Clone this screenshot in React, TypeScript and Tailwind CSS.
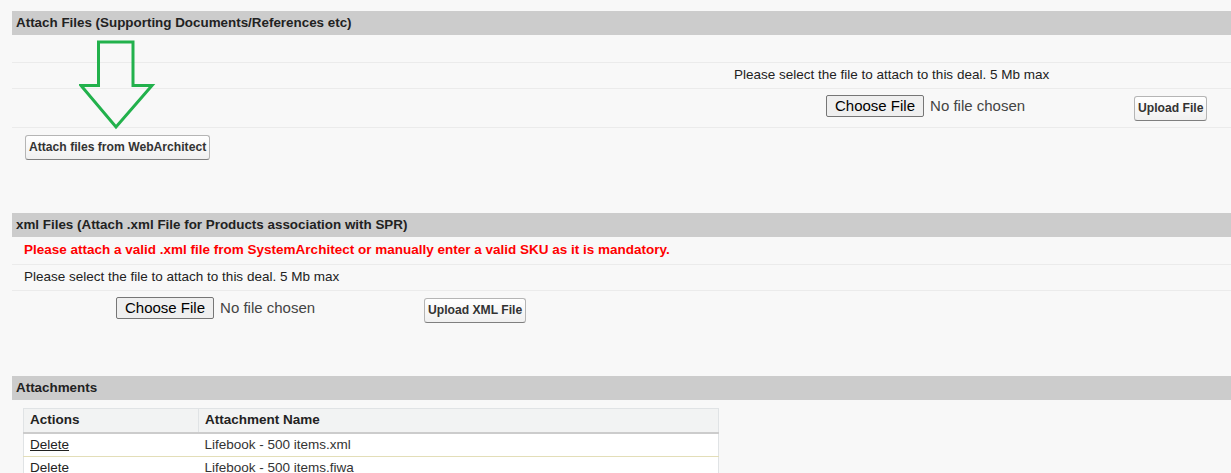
export default function App() {
  const font = { fontFamily: '"Liberation Sans", Arial, sans-serif' }

  return (
    <div className="min-h-[473px] w-[1231px] overflow-hidden bg-[#f8f8f8] pl-[12px] pt-[11px] text-[13.5px] text-[#222]" style={font}>
      <div className="relative">
        <SectionHeader title="Attach Files (Supporting Documents/References etc)" />

        <div className="h-[28px] border-b border-[#ebebeb]" />
        <div className="flex h-[26px] items-center border-b border-[#ebebeb] pl-[722px] text-[#222]">
          Please select the file to attach to this deal. 5 Mb max
        </div>
        <div className="flex h-[39px] items-start border-b border-[#ebebeb] pl-[814px] pt-[6px]">
          <FileChooser />
          <UploadButton label="Upload File" />
        </div>
        <div className="h-[85px] pl-[13px] pt-[6px]">
          <UploadButton label="Attach files from WebArchitect" />
        </div>

        {/* green arrow pointing at the WebArchitect button */}
        <svg className="absolute left-[67px] top-[29px]" width="90" height="92" viewBox="67 29 90 92">
          <polygon
            points="86.5,31 121,31 121,74.5 140,74.5 104,116 69,74.5 86.5,74.5"
            fill="none"
            stroke="#22b14c"
            strokeWidth="3"
            strokeLinejoin="miter"
          />
        </svg>
      </div>

      <SectionHeader title="xml Files (Attach .xml File for Products association with SPR)" />
      <div className="flex h-[28px] items-center border-b border-[#ebebeb] pl-[12px] font-bold text-[#ff0000]">
        Please attach a valid .xml file from SystemArchitect or manually enter a valid SKU as it is mandatory.
      </div>
      <div className="flex h-[26px] items-center border-b border-[#ebebeb] pl-[12px]">
        Please select the file to attach to this deal. 5 Mb max
      </div>
      <div className="flex h-[85px] items-start pl-[104px] pt-[6px]">
        <FileChooser />
        <UploadButton label="Upload XML File" />
      </div>

      <SectionHeader title="Attachments" />
      <div className="pl-[11px] pt-[8px]">
        <table className="w-[696px] border-collapse border border-[#e0e3e5] bg-white">
          <thead>
            <tr className="h-[24px] border-b-2 border-[#cccccc] bg-[#f2f3f3] text-left">
              <th className="w-[175px] border-r border-[#e0e3e5] pl-[6px] font-bold">Actions</th>
              <th className="pl-[6px] font-bold">Attachment Name</th>
            </tr>
          </thead>
          <tbody className="text-[#333]">
            {['Lifebook - 500 items.xml', 'Lifebook - 500 items.fiwa'].map((name) => (
              <tr key={name} className="h-[24px] border-b border-[#e3deb8]">
                <td className="pl-[6px]">
                  <a className="text-[#222] underline">Delete</a>
                </td>
                <td className="pl-[6px]">{name}</td>
              </tr>
            ))}
          </tbody>
        </table>
      </div>
    </div>
  )
}

function SectionHeader({ title }: { title: string }) {
  return (
    <div className="flex h-[24px] items-center bg-[#cccccc] pl-[4px] text-[13.4px] font-bold text-[#222]">
      {title}
    </div>
  )
}

function FileChooser() {
  return (
    <div className="flex w-[308px] items-center text-[15px]">
      <span className="flex h-[22px] items-center rounded-[2px] border border-[#767676] bg-[#efefef] px-[8px] text-black">
        Choose File
      </span>
      <span className="ml-[6px] text-[#444]">No file chosen</span>
    </div>
  )
}

function UploadButton({ label }: { label: string }) {
  return (
    <button className="mt-[1px] h-[25px] rounded-[3px] border border-[#b5b5b5] border-b-[#7f7f7f] bg-[linear-gradient(#ffffff,#f0f0f0)] px-[3px] text-[12.15px] font-bold text-[#333]">
      {label}
    </button>
  )
}
